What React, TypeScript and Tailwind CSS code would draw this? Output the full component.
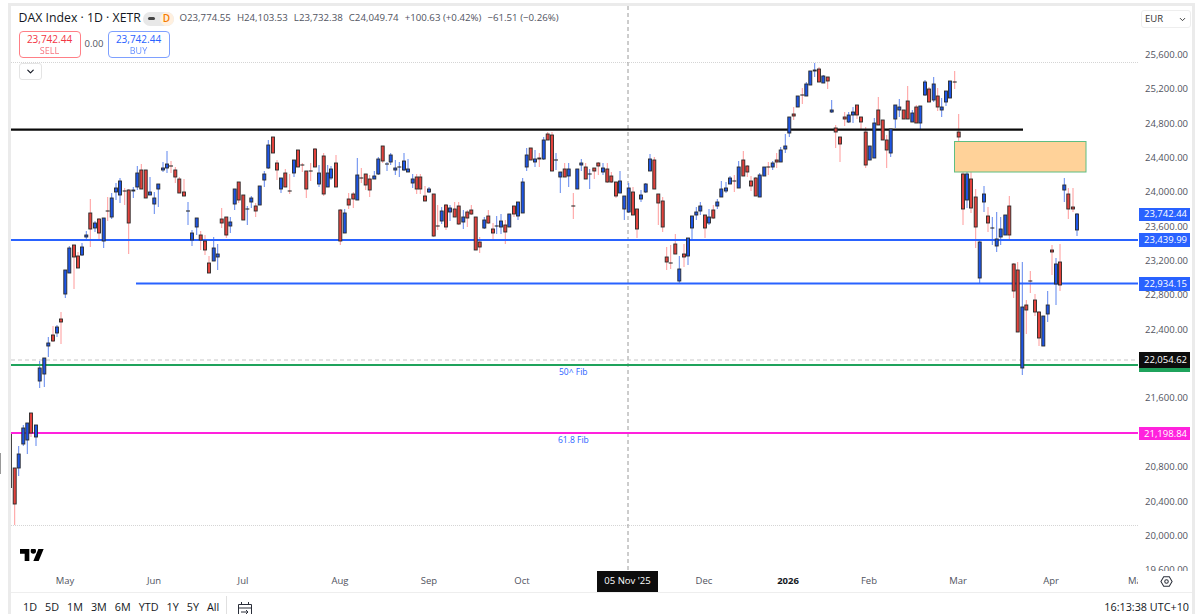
import { ChevronDown } from "lucide-react"

// x, wick top, wick bottom, body top, body bottom, 1 = up (blue), 0 = down (red)
type Candle = [number, number, number, number, number, number]

const candles: Candle[] = [
  [14.7,468,525,468,504,0],[18.7,446,476,454,468,1],[23.3,425,446,428,444,1],[27.3,423,454,423,440,1],[31,413,437,413,433,0],[36,425,446,425,437,1],
  [39.7,361,388,368,381,1],[44.3,358,387,358,374,1],[48.3,337,357,343,346,1],[53,326,342,335,341,0],[57,325,337,327,333,1],[61,312,344,319,322,0],
  [65.3,270,298,270,294,1],[69.3,246,273,248,273,1],[74,245,289,245,257,0],[78,252,268,256,268,0],[82,243,256,247,255,1],[86.3,231,240,235,237,1],
  [90.3,199,247,213,229,0],[95,221,232,223,228,1],[99,218,239,219,233,0],[103.7,218,248,218,241,1],[107.7,197,221,211,211,0],[111.7,193,219,198,217,1],
  [116,183,200,188,192,1],[120,178,203,181,195,1],[124.7,188,205,191,191,0],[128.7,189,254,190,223,0],[133.3,187,198,190,191,1],[137.3,166,190,173,187,1],
  [141.3,164,189,170,189,0],[145.7,170,198,170,198,0],[150,177,195,192,195,1],[154.3,192,214,198,204,1],[158.3,184,207,184,189,1],[163,162,172,168,170,1],
  [167,151,173,164,168,1],[171,161,173,166,166,0],[175.3,167,183,170,177,0],[179.3,177,193,179,193,0],[184,179,196,192,196,0],[188,202,225,211,211,1],
  [192,230,246,233,240,1],[196.7,218,235,218,227,1],[200.7,231,250,235,240,0],[205,235,255,241,250,0],[209,256,273,263,273,0],[213.7,237,261,248,261,1],
  [217.7,244,270,254,257,1],[221.7,208,228,219,223,0],[226.3,217,238,217,235,0],[230.3,217,233,222,226,1],[234.7,189,210,189,204,1],[238.7,182,203,182,200,0],
  [243.3,195,220,195,220,0],[247.3,206,225,209,209,1],[251.3,196,208,198,202,1],[255.7,203,217,206,211,0],[259.7,186,205,186,205,1],[264.3,171,187,174,180,1],
  [268.3,140,169,145,168,1],[273,137,153,137,153,0],[277,160,180,163,170,0],[281,178,193,178,189,1],[285.3,169,187,173,187,0],[289.7,174,194,191,191,0],
  [294,160,177,160,173,1],[298,150,167,150,167,0],[302.3,163,172,165,165,0],[306.3,171,198,171,189,0],[310.7,163,181,171,171,0],[315,148,167,149,167,0],
  [319,165,187,173,184,1],[323.7,153,196,156,194,0],[327.7,165,187,173,187,1],[331,166,180,169,178,1],[336,155,187,163,187,0],[340.3,209,245,210,241,0],
  [344.7,209,233,213,233,1],[348.7,193,209,199,205,0],[353.3,192,208,194,199,0],[357.3,158,200,175,200,1],[361.3,168,183,178,178,0],[365.7,174,190,174,185,0],
  [369.7,175,197,179,190,0],[374.3,171,179,176,179,1],[378.3,157,175,159,174,1],[382.7,146,163,146,161,0],[387,162,171,164,164,1],[390.7,153,165,155,162,1],
  [395.3,160,175,168,170,1],[399.3,162,177,167,167,1],[404,153,171,161,170,1],[408,159,172,169,172,1],[412.7,174,188,179,183,1],[416.7,174,194,177,189,0],
  [420.3,174,194,177,189,0],[425,186,201,196,201,0],[429,187,193,189,192,1],[433.7,194,237,194,236,0],[437.7,205,230,226,226,0],[441.7,207,224,211,221,1],
  [446,204,230,205,227,0],[450,205,221,208,212,1],[454.7,202,217,209,217,0],[458.7,202,225,206,224,0],[463.3,210,229,217,222,1],[467.3,210,227,212,218,0],
  [471.3,205,215,210,214,0],[475.7,217,250,217,250,0],[479.7,237,253,242,247,0],[484.3,217,229,220,228,1],[488.3,210,224,216,223,0],[493,223,241,229,233,0],
  [496.7,216,234,226,226,1],[501,214,234,221,227,1],[505.3,220,244,225,232,0],[509.3,214,227,214,227,1],[514,206,217,206,214,0],[518,202,220,202,216,1],
  [522.7,178,213,182,213,1],[526.7,148,171,155,167,1],[530.7,148,160,148,160,0],[535,150,167,159,162,1],[539.3,153,167,158,159,0],[543.7,137,160,140,159,1],
  [547.7,132,140,134,140,0],[552,132,171,135,171,0],[556,153,170,160,160,1],[560.3,172,193,172,177,1],[564.7,163,177,169,177,0],[568.7,163,187,169,176,1],
  [573.3,193,219,206,206,0],[577.3,169,189,169,189,1],[581.3,159,171,163,165,1],[585.7,163,179,167,179,0],[589.7,169,189,174,174,1],[594.3,168,179,168,171,0],
  [598.3,162,175,163,166,0],[603,163,175,168,172,1],[607.3,163,183,169,182,0],[611.3,172,183,176,182,0],[616,182,198,182,196,0],[620,171,193,181,193,1],
  [624.3,196,220,196,209,1],[628.7,183,213,188,212,1],[633,187,215,192,215,0],[637,209,238,209,229,0],[641,190,202,195,199,1],[645.7,183,193,184,192,1],
  [650,154,171,159,171,1],[654.3,157,189,160,189,0],[658.3,194,225,194,203,0],[662.7,197,232,201,227,0],[666.7,247,270,257,262,0],[670.7,245,269,263,263,0],
  [675.3,234,254,244,254,0],[679.3,256,283,269,281,1],[684,244,267,254,257,0],[688,238,265,238,256,1],[692,216,240,216,228,1],[696.3,207,220,212,215,1],
  [700.3,202,215,206,211,1],[705,215,238,215,228,0],[709,209,225,217,223,1],[713.3,205,219,210,218,0],[717.3,199,209,202,206,1],[721.3,181,197,189,197,1],
  [726,182,193,188,191,1],[730,176,184,178,184,1],[734.3,175,192,181,181,0],[738.7,161,188,167,188,1],[743.3,151,176,160,176,0],[747.3,165,177,166,172,0],
  [751,176,191,181,186,0],[755.7,177,196,178,196,0],[759.7,173,197,175,197,1],[764.3,167,176,167,176,1],[768.3,162,175,167,167,0],[772.7,161,170,163,167,1],
  [776.7,153,168,160,162,0],[780.7,147,162,150,162,1],[785.3,134,153,146,149,1],[789.3,117,137,117,133,1],[793.7,107,120,114,116,0],[797.7,96,107,96,107,1],
  [802.3,88,104,95,95,0],[806.3,82,96,84,96,1],[810.3,71,85,71,85,1],[814.7,63,77,70,71,1],[819,67,82,69,82,0],[823.3,75,83,76,83,1],[827.7,77,89,77,81,0],
  [831.7,100,113,110,112,1],[835.7,125,148,128,132,0],[840,137,162,137,144,0],[844.7,112,126,117,119,0],[848.7,112,123,115,122,1],[853,107,123,112,115,1],
  [857,105,119,105,115,0],[861,117,130,117,122,0],[865.7,127,168,132,165,0],[869.7,146,160,146,160,1],[874.3,118,158,123,158,1],[878.3,97,125,110,125,0],
  [882.7,120,140,120,140,0],[886.7,135,168,140,150,0],[890.7,129,157,129,153,1],[895.3,105,128,105,119,1],[899.3,99,117,107,110,1],[903.7,110,119,110,119,0],
  [907.7,86,119,101,119,0],[912.3,110,122,113,122,1],[916.3,105,123,107,123,0],[920.3,106,129,106,123,1],[925,80,96,82,95,1],[929,87,102,89,102,0],
  [933.7,77,102,84,100,1],[937.7,88,111,96,107,0],[941.7,98,117,107,110,1],[946,91,106,91,102,1],[950,81,98,81,98,1],[954.7,71,89,82,82,0],[958.7,114,142,132,137,0],
  [963,172,225,174,209,0],[967,172,208,174,200,1],[971,160,213,179,208,0],[975.7,189,248,197,227,0],[979.7,240,283,242,278,1],[984,186,212,194,202,1],
  [988,207,232,216,223,0],[992.3,217,245,228,228,1],[996.7,212,252,239,246,1],[1000.7,217,245,229,237,1],[1005.3,215,235,215,235,1],[1009.3,196,239,206,235,0],
  [1013.7,263,298,264,291,0],[1017.7,262,332,270,332,0],[1022.3,262,375,307,368,1],[1026.3,300,334,305,310,0],[1030.3,271,293,281,281,0],[1035,294,316,300,312,0],
  [1039,311,346,312,338,0],[1043.3,316,346,316,346,1],[1047.7,291,322,305,314,1],[1052,245,275,250,252,0],[1056,258,305,264,284,1],[1060,244,291,262,285,0],
  [1064.3,178,202,185,190,1],[1068.3,188,219,194,209,0],[1073,188,212,207,209,0],[1077,213,236,214,230,1],
]

// the two empty rows sit behind the price tags
const prices = ["25,600.00","25,200.00","24,800.00","24,400.00","24,000.00","23,600.00","23,200.00","22,800.00","22,400.00","","21,600.00","","20,800.00","20,400.00","20,000.00","19,600.00"]

const ranges = ["1D","5D","1M","3M","6M","YTD","1Y","5Y","All"]

function Chart() {
  return (
    <svg viewBox="11 6 1127 565" className="absolute inset-0 h-full w-full blur-[0.3px]">
      <line x1="11" x2="1138" y1="62.5" y2="62.5" stroke="#d5d5d5" strokeWidth="1" strokeDasharray="1 1" />
      <line x1="11" x2="1138" y1="525.5" y2="525.5" stroke="#d5d5d5" strokeWidth="1" strokeDasharray="1 1" />
      <line x1="628" x2="628" y1="6" y2="571" stroke="#9a9a9a" strokeWidth="1" strokeDasharray="4 3" />
      <line x1="11" x2="1138" y1="360" y2="360" stroke="#c8c8c8" strokeWidth="1.2" strokeDasharray="4 3" />
      <line x1="11.5" x2="11.5" y1="433" y2="488" stroke="#444" strokeWidth="1" />
      {candles.map(([x, wt, wb, , , up], i) => (
        <line key={i} x1={x} x2={x} y1={wt} y2={wb} stroke={up ? "#5f86ee" : "#ff9a9a"} strokeWidth="1" />
      ))}
      <line x1="11" x2="1023" y1="129.7" y2="129.7" stroke="#0a0a0a" strokeWidth="2.2" />
      <line x1="11" x2="1138" y1="240" y2="240" stroke="#2962ff" strokeWidth="2.2" />
      <line x1="136" x2="1138" y1="283.5" y2="283.5" stroke="#2962ff" strokeWidth="2.2" />
      <line x1="11" x2="1138" y1="365" y2="365" stroke="#1fa35c" strokeWidth="2.2" />
      <line x1="11" x2="1138" y1="433" y2="433" stroke="#ff22dd" strokeWidth="2.2" />
      <rect x="954.5" y="141.5" width="131.5" height="30.5" fill="#ffd299" stroke="#5fbe82" strokeWidth="1" />
      {candles.map(([x, , , bt, bb, up], i) =>
        bb - bt < 1 ? (
          <rect key={i} x={x - 2} y={bt - 0.5} width="4" height="1" fill="#1a1a1a" />
        ) : (
          <rect key={i} x={x - 1.5} y={bt} width="3" height={bb - bt} fill={up ? "#1c55e6" : "#e2423c"} stroke="#2b2b2b" strokeWidth="0.9" />
        )
      )}
    </svg>
  )
}

function PriceTag({ label, className }: { label: string; className: string }) {
  return (
    <div className={"absolute left-[-1px] flex w-[52px] items-center justify-end pr-[3px] text-[9.5px] leading-none text-white " + className}>
      {label}
    </div>
  )
}

function Button({ color, label, action }: { color: string; label: string; action: string }) {
  return (
    <div className={"flex h-[27px] w-[62px] flex-col items-center justify-center rounded-[4px] border bg-white " + color}>
      <span className="text-[10px] font-medium leading-[12px]">{label}</span>
      <span className="text-[9px] leading-[12px] opacity-70">{action}</span>
    </div>
  )
}

export default function App() {
  return (
    <div className="relative flex h-[614px] w-[1200px] flex-col overflow-hidden bg-white pt-[3px] font-['Open_Sans',sans-serif] text-[#131722]">
      <div className="absolute left-0 top-[453px] h-[21px] w-[1px] bg-[#999999]" />
      <div className="flex min-h-0 flex-1 pl-[8px] pr-[5px]">
        <div className="flex min-w-0 flex-1 flex-col border-x-[3px] border-t-[3px] border-[#ebebeb]">
          <div className="flex h-[565px] shrink-0">
            {/* plot */}
            <div className="relative w-[1127px] shrink-0 overflow-hidden">
              <Chart />

              <div className="absolute left-[7.5px] top-[3px] flex flex-col">
                <div className="flex h-[19px] items-center whitespace-nowrap">
                  <span className="w-[118px] text-[12.3px]">DAX Index · 1D · XETR</span>
                  <span className="ml-[6px] flex h-[14px] w-[31px] items-center overflow-hidden rounded-full bg-[#e8e8e8]">
                    <span className="flex flex-1 justify-center"><span className="h-[2.5px] w-[7px] rounded-sm bg-[#444]" /></span>
                    <span className="flex h-full w-[14px] items-center justify-center rounded-full bg-[#fff0df] text-[10px] font-semibold text-[#f57c00]">D</span>
                  </span>
                  <div className="ml-[6px] flex gap-[6px] text-[9.7px] text-[#50535e]">
                    <span>O23,774.55</span>
                    <span>H24,103.53</span>
                    <span>L23,732.38</span>
                    <span>C24,049.74</span>
                    <span>+100.63 (+0.42%)</span>
                    <span>−61.51 (−0.26%)</span>
                  </div>
                </div>
                <div className="mt-[3px] flex items-center">
                  <Button color="border-[#ff7f86] text-[#f23645]" label="23,742.44" action="SELL" />
                  <span className="w-[27px] text-center text-[9.5px] text-[#50535e]">0.00</span>
                  <Button color="border-[#7ea0ff] text-[#2962ff]" label="23,742.44" action="BUY" />
                </div>
                <div className="mt-[5px] flex h-[17px] w-[23px] items-center justify-center rounded-[3px] border border-[#e4e4e4] bg-white">
                  <ChevronDown size={11} strokeWidth={2.5} />
                </div>
              </div>

              <div className="absolute left-[548px] top-[360px] text-[8.5px] leading-[12px] text-[#2962ff]">50^ Fib</div>
              <div className="absolute left-[547px] top-[428px] text-[8.5px] leading-[12px] text-[#2962ff]">61.8 Fib</div>

              <svg viewBox="0 4 36 18" className="absolute left-[9px] top-[543px] h-[12px] w-[24px] fill-black">
                <path d="M14 22H7V11H0V4h14v18zM28 22h-8l7.5-18h8L28 22z" />
                <circle cx="20" cy="7" r="4" />
              </svg>
            </div>

            {/* price axis */}
            <div className="relative flex-1 overflow-hidden border-l border-white">
              <div className="ml-[2px] mr-[1px] mt-[4px] flex h-[18px] items-center justify-between rounded-[3px] border border-[#eeeeee] pl-[3px] pr-[3px] text-[9.5px] text-[#333]">
                EUR
                <ChevronDown size={9} strokeWidth={2.5} />
              </div>
              <div className="mt-[9.8px] flex flex-col items-end pr-[4px] text-[9.5px] text-[#50535e]">
                {prices.map((p, i) => (
                  <div key={i} className="flex h-[34.36px] shrink-0 items-center">{p}</div>
                ))}
              </div>
              <PriceTag label="23,742.44" className="top-[201.5px] h-[13px] bg-[#2962ff]" />
              <PriceTag label="23,439.99" className="top-[227px] h-[14px] bg-[#2962ff]" />
              <PriceTag label="22,934.15" className="top-[271px] h-[14px] bg-[#2962ff]" />
              <div className="absolute left-[-1px] top-[356px] h-[10px] w-[52px] bg-[#1fa35c]" />
              <PriceTag label="22,054.62" className="top-[346px] h-[16px] bg-[#0d0d0d]" />
              <PriceTag label="21,198.84" className="top-[421px] h-[13px] bg-[#ff22dd]" />
            </div>
          </div>

          {/* time axis */}
          <div className="flex h-[22px] shrink-0 items-center border-b border-[#eeeeee] text-[9.5px] text-[#50535e]">
            <div className="flex w-[1127px] shrink-0 items-center overflow-hidden">
              <span className="w-[108px] shrink-0 text-center">May</span>
              <span className="w-[70px] shrink-0 text-center">Jun</span>
              <span className="ml-[19px] w-[70px] shrink-0 text-center">Jul</span>
              <span className="ml-[27px] w-[70px] shrink-0 text-center">Aug</span>
              <span className="ml-[19px] w-[70px] shrink-0 text-center">Sep</span>
              <span className="ml-[23px] w-[70px] shrink-0 text-center">Oct</span>
              <span className="ml-[40px] flex h-[21px] w-[61px] shrink-0 items-center justify-center bg-[#0d0d0d] text-white">05 Nov '25</span>
              <span className="ml-[11px] w-[70px] shrink-0 text-center">Dec</span>
              <span className="ml-[14px] w-[70px] shrink-0 text-center font-bold text-[#131722]">2026</span>
              <span className="ml-[11px] w-[70px] shrink-0 text-center">Feb</span>
              <span className="ml-[19px] w-[70px] shrink-0 text-center">Mar</span>
              <span className="ml-[23px] w-[70px] shrink-0 text-center">Apr</span>
              <span className="ml-[42px] w-[10px] shrink-0 overflow-hidden whitespace-nowrap">Ma</span>
            </div>
            <div className="flex flex-1 justify-center pl-[2px]">
              <svg viewBox="0 0 14 14" className="h-[13px] w-[13px]" fill="none" stroke="#2a2e39" strokeWidth="1.1">
                <path d="M4 1.8h6L13 7l-3 5.2H4L1 7z" />
                <circle cx="7" cy="7" r="1.9" />
              </svg>
            </div>
          </div>

          {/* range bar */}
          <div className="flex h-[21px] shrink-0 justify-between overflow-hidden pt-[6px] text-[10.8px] leading-[15px]">
            <div className="flex items-start">
              <div className="ml-[12px] flex gap-[8px]">
                {ranges.map((r) => (
                  <span key={r}>{r}</span>
                ))}
              </div>
              <span className="ml-[7px] mt-[-3px] h-[20px] w-px bg-[#e0e0e0]" />
              <svg viewBox="0 0 16 16" className="ml-[10px] mt-[2px] h-[16px] w-[16px]" fill="none" stroke="#2a2e39" strokeWidth="1">
                <path d="M1.5 3.5h13v11h-13zM4.5 1v3M11.5 1v3M1.5 7h13M4 11h7M9 9l2 2-2 2" />
              </svg>
            </div>
            <span className="pr-[3px]">16:13:38 UTC+10</span>
          </div>
        </div>
      </div>
    </div>
  )
}
